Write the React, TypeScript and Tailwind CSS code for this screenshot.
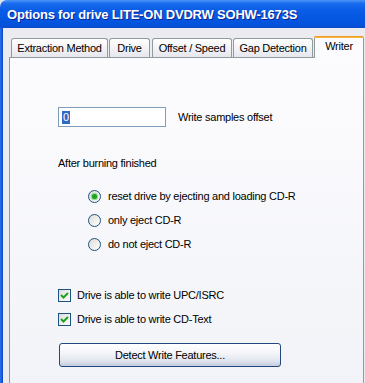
import React from "react";

const tabs = [
  { label: "Extraction Method", w: "w-[97px]", ml: "ml-[2px]" },
  { label: "Drive", w: "w-[41px]", ml: "ml-[1px]" },
  { label: "Offset / Speed", w: "w-[80px]", ml: "ml-[2px]" },
  { label: "Gap Detection", w: "w-[80px]", ml: "ml-[1px]" },
];

const Radio = ({ checked, label }: { checked?: boolean; label: string }) => (
  <div className="h-[24px] flex items-center pl-[78px]">
    <div className="w-[13px] h-[13px] rounded-full border border-[#1c5180] bg-[linear-gradient(135deg,#dcdcd7,#ffffff)] flex items-center justify-center">
      {checked && (
        <div className="w-[5px] h-[5px] rounded-full bg-[#21a121] shadow-[0_0_1px_1px_#7fd37f]" />
      )}
    </div>
    <span className="ml-[7px]">{label}</span>
  </div>
);

const Check = ({ label }: { label: string }) => (
  <div className="h-[24px] flex items-center pl-[48px]">
    <div className="w-[13px] h-[13px] border border-[#1c5180] bg-[linear-gradient(135deg,#dcdcd7,#ffffff)] flex items-center justify-center">
      <svg width="9" height="9" viewBox="0 0 9 9">
        <path d="M1 4 L3.5 6.5 L8 2" fill="none" stroke="#21a121" strokeWidth="2" />
      </svg>
    </div>
    <span className="ml-[6px]">{label}</span>
  </div>
);

export default function App() {
  return (
    <div className="w-[365px] h-[383px] overflow-hidden flex flex-col bg-[#dfe3ec] font-['Liberation_Sans',Arial,sans-serif] text-[11px] tracking-[-0.25px] text-black">
      {/* title bar */}
      <div className="h-[28px] shrink-0 rounded-tl-[7px] flex items-center pl-[7px] pt-[2px] bg-[linear-gradient(to_bottom,#4a95f7_0%,#1a6cee_12%,#0a5de6_35%,#0558e2_60%,#0352dc_88%,#0a4ccc_100%)]">
        <span className="text-white font-bold text-[13px] tracking-[-0.2px] [text-shadow:1px_1px_#0c2590]">
          Options for drive LITE-ON DVDRW SOHW-1673S
        </span>
      </div>

      <div className="flex flex-1">
        {/* window frame */}
        <div className="w-[3px] shrink-0 bg-[linear-gradient(to_right,#2c70ee,#1259e0_66%,#0a40b8)]" />

        <div className="flex-1 flex flex-col pl-[6px] pr-[2px] pt-[8px] bg-[#ecebef]">
          {/* tabs */}
          <div className="flex items-end h-[21px]">
            {tabs.map((t) => (
              <div
                key={t.label}
                className={`${t.w} ${t.ml} h-[19px] border border-b-0 border-[#919b9c] rounded-t-[3px] bg-[linear-gradient(to_bottom,#ffffff,#f3f3f6_50%,#e6e7ee)] flex items-center justify-center`}
              >
                {t.label}
              </div>
            ))}
            <div className="w-[50px] ml-[1px] h-[22px] -mb-[1px] relative z-10 border-x border-[#919b9c] rounded-t-[3px] bg-[#fcfcfe] flex flex-col">
              <div className="h-[3px] rounded-t-[3px] bg-[linear-gradient(to_bottom,#e68b2c,#ffc73c)] -mx-[1px]" />
              <div className="flex-1 flex items-center justify-center pb-[4px]">Writer</div>
            </div>
          </div>

          {/* panel */}
          <div className="flex-1 border border-b-0 border-[#919b9c] bg-[linear-gradient(to_bottom,#fcfcfe,#f2f3f8)] flex flex-col">
            <div className="mt-[49px] pl-[48px] flex items-center">
              <div className="w-[108px] h-[20px] border border-[#7f9db9] bg-white flex items-center pl-[3px]">
                <span className="bg-[#316ac5] text-white leading-[13px] px-[1px]">0</span>
              </div>
              <span className="ml-[12px]">Write samples offset</span>
            </div>

            <div className="mt-[30px] pl-[48px] h-[13px] leading-[13px]">After burning finished</div>

            <div className="mt-[14px]">
              <Radio checked label="reset drive by ejecting and loading CD-R" />
              <Radio label="only eject CD-R" />
              <Radio label="do not eject CD-R" />
            </div>

            <div className="mt-[27px]">
              <Check label="Drive is able to write UPC/ISRC" />
              <Check label="Drive is able to write CD-Text" />
            </div>

            <div className="mt-[12px] ml-[49px]">
              <button className="w-[222px] h-[24px] rounded-[3px] border border-[#23487f] bg-[linear-gradient(to_bottom,#ffffff,#f3f4f8_45%,#dde2ec_80%,#c4cddd)] flex items-center justify-center">
                Detect Write Features...
              </button>
            </div>
          </div>
        </div>
      </div>
    </div>
  );
}
